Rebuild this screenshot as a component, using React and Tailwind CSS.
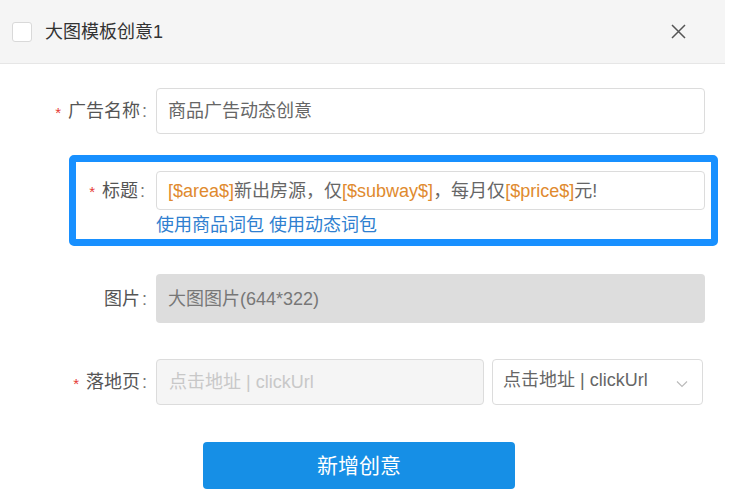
import React from "react";

const font = { fontFamily: '"Liberation Sans", "Noto Sans CJK SC", sans-serif' };

function Label({ text, required, width = 147 }) {
  return (
    <div className="flex items-center justify-end shrink-0 text-[18px] text-[#555]" style={{ width }}>
      {required && <span className="text-[#e53935] text-[15px] mr-[7px] mt-[2px]">*</span>}
      <span>{text}</span>
      <span className="ml-[2px] text-[#777]">:</span>
    </div>
  );
}

export default function App() {
  return (
    <div className="w-[736px] h-[492px] overflow-hidden bg-white leading-none" style={font}>
      {/* header */}
      <div className="w-[725px] h-16 bg-[#f5f5f5] border-b border-[#e6e6e6] flex items-center pl-[12px]">
        <div className="w-[20px] h-[20px] bg-white border border-[#d9d9d9] rounded-[3px]" />
        <span className="ml-[13px] text-[18px] text-[#333]">大图模板创意1</span>
        <svg className="ml-auto mr-[39px]" width="15" height="15" viewBox="0 0 15 15">
          <path d="M1 1 L14 14 M14 1 L1 14" stroke="#555" strokeWidth="1.5" fill="none" />
        </svg>
      </div>

      {/* row 1 */}
      <div className="mt-[24px] flex items-center">
        <Label text="广告名称" required />
        <div className="ml-[9px] w-[549px] h-[46px] border border-[#dcdcdc] rounded-[4px] flex items-center px-[11px] text-[18px] text-[#666]">
          商品广告动态创意
        </div>
      </div>

      {/* highlighted title row */}
      <div className="mt-[21px] ml-[69px] w-[649px] h-[91px] border-[7px] border-[#1890ff] rounded-[5px] pt-[9px]">
        <div className="flex items-center">
          <Label text="标题" required width={69} />
          <div className="ml-[11px] w-[549px] h-[39px] border border-[#dcdcdc] rounded-[4px] flex items-center px-[11px] text-[18px] text-[#666] whitespace-nowrap">
            <span className="text-[#e08a2e]">[$area$]</span>新出房源，仅
            <span className="text-[#e08a2e]">[$subway$]</span>，每月仅
            <span className="text-[#e08a2e]">[$price$]</span>元!
          </div>
        </div>
        <div className="mt-[6px] ml-[80px] text-[18px] text-[#2f7fd0] whitespace-nowrap">
          使用商品词包 使用动态词包
        </div>
      </div>

      {/* image row */}
      <div className="mt-[28px] flex items-center">
        <Label text="图片" />
        <div className="ml-[9px] w-[549px] h-[49px] bg-[#dddddd] rounded-[4px] flex items-center px-[12px] text-[18px] text-[#777]">
          大图图片(644*322)
        </div>
      </div>

      {/* landing row */}
      <div className="mt-[36px] flex items-center">
        <Label text="落地页" required />
        <div className="ml-[9px] w-[328px] h-[46px] bg-[#f5f5f5] border border-[#dcdcdc] rounded-[4px] flex items-center px-[12px] text-[18px] text-[#c8c8c8] whitespace-nowrap">
          点击地址 | clickUrl
        </div>
        <div className="ml-[8px] w-[211px] h-[46px] border border-[#dcdcdc] rounded-[4px] flex items-center pl-[10px] pr-[14px] text-[18px] text-[#666] whitespace-nowrap">
          <span className="-mt-[4px]">点击地址 | clickUrl</span>
          <svg className="ml-auto mt-[4px]" width="12" height="8" viewBox="0 0 12 8">
            <path d="M1 1.5 L6 6.5 L11 1.5" stroke="#bbb" strokeWidth="1.2" fill="none" />
          </svg>
        </div>
      </div>

      {/* button */}
      <div className="mt-[37px] ml-[203px] w-[312px] h-[47px] bg-[#168fe6] rounded-[4px] flex items-center justify-center text-white text-[21px]">
        新增创意
      </div>
    </div>
  );
}
